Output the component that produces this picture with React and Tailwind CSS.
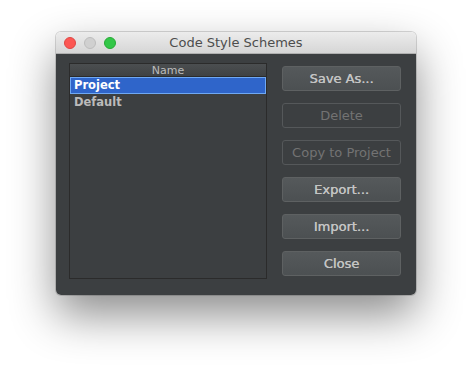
import React from "react";

const font = { fontFamily: '"DejaVu Sans", "Liberation Sans", sans-serif' };

function Btn({ children, disabled }) {
  return (
    <div
      className={
        "h-[25px] w-[119px] rounded-[3px] border flex items-center justify-center text-[13px] " +
        (disabled
          ? "border-[#55585a] bg-[#3c3f41] text-[#737373]"
          : "border-[#5e6162] bg-gradient-to-b from-[#55595b] to-[#4c5052] text-[#c4c4c4] [text-shadow:0.3px_0_0_#c4c4c4]")
      }
    >
      {children}
    </div>
  );
}

export default function App() {
  return (
    <div className="w-[472px] h-[375px] bg-white pt-[32px] pl-[56px]" style={font}>
      <div className="w-[360px] h-[263px] rounded-[5px] flex flex-col shadow-[0_20px_45px_rgba(0,0,0,0.45),0_0_0_1px_rgba(0,0,0,0.15)]">
        <div className="h-[22px] rounded-t-[5px] bg-gradient-to-b from-[#ececec] to-[#d6d6d6] border-b border-[#b0b0b0] flex items-center relative">
          <div className="flex items-center gap-[8px] pl-[8px]">
            <div className="w-[12px] h-[12px] rounded-full bg-[#fc5753] border border-[#df4744]" />
            <div className="w-[12px] h-[12px] rounded-full bg-[#d0d0d0] border border-[#bdbdbd]" />
            <div className="w-[12px] h-[12px] rounded-full bg-[#33c748] border border-[#27aa35]" />
          </div>
          <div className="absolute inset-0 flex items-center justify-center text-[13px] text-[#4d4d4d]">
            Code Style Schemes
          </div>
        </div>
        <div className="flex-1 bg-[#3c3f41] rounded-b-[5px] flex pl-[13px] pr-[15px] pt-[9px] pb-[16px] gap-[15px]">
          <div className="w-[198px] h-full border border-[#2b2b2b] flex flex-col">
            <div className="h-[13px] bg-gradient-to-b from-[#4b4e50] to-[#3f4244] border-b border-[#2b2b2b] flex items-center justify-center text-[11px] text-[#bbbbbb] leading-none">
              Name
            </div>
            <div className="h-[17px] bg-[#2f65ca] border border-[#6fa8f3] flex items-center pl-[3px] text-[11.5px] font-bold text-white">
              Project
            </div>
            <div className="h-[17px] flex items-center pl-[4px] text-[11.5px] font-bold text-[#bbbbbb]">
              Default
            </div>
          </div>
          <div className="flex flex-col gap-[12px] pt-[3px]">
            <Btn>Save As...</Btn>
            <Btn disabled>Delete</Btn>
            <Btn disabled>Copy to Project</Btn>
            <Btn>Export...</Btn>
            <Btn>Import...</Btn>
            <Btn>Close</Btn>
          </div>
        </div>
      </div>
    </div>
  );
}
